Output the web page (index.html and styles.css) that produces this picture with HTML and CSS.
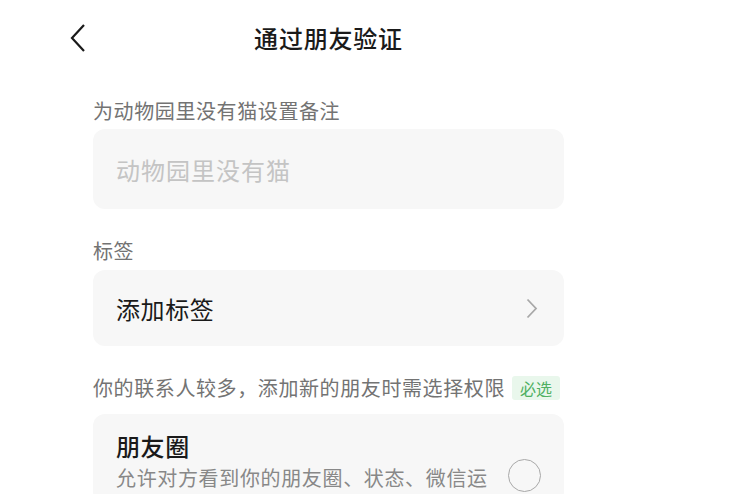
FILE: index.html
```html
<!DOCTYPE html>
<html>
<head lang="zh">
    <meta charset="UTF-8">
    <title>通过朋友验证</title>
    <link rel="stylesheet" href="styles.css">
</head>
<body>
<div class="page">
    <div class="header">
        <a href="#" class="back">
            <svg width="16" height="28" viewBox="0 0 16 28"><path d="M14 1 L2 14 L14 27" fill="none" stroke="#1a1a1a" stroke-width="2.2"/></svg>
        </a>
        <span class="title">通过朋友验证</span>
        <span></span>
    </div>

    <p class="label first">为动物园里没有猫设置备注</p>
    <div class="box input">
        <span class="placeholder">动物园里没有猫</span>
    </div>

    <p class="label">标签</p>
    <div class="box row">
        <span class="text">添加标签</span>
        <svg class="chevron" width="12" height="21" viewBox="0 0 12 21"><path d="M1.5 1.5 L10 10.5 L1.5 19.5" fill="none" stroke="#a8a8a8" stroke-width="1.8"/></svg>
    </div>

    <p class="label">你的联系人较多，添加新的朋友时需选择权限<span class="badge">必选</span></p>
    <div class="box card">
        <div class="card-text">
            <div class="card-title">朋友圈</div>
            <div class="card-sub">允许对方看到你的朋友圈、状态、微信运</div>
        </div>
        <span class="radio"></span>
    </div>
</div>
</body>
</html>
```

FILE: styles.css
```css
body {
    margin: 0px;
    background: #ffffff;
    font-family: "Noto Sans CJK SC", "Noto Sans", sans-serif;
    overflow: hidden;
}
.page {
    width: 471px;
    padding-left: 93px;
}
.header {
    display: grid;
    grid-template-columns: 1fr auto 1fr;
    align-items: center;
    height: 75px;
    width: 517px;
    margin-left: -23px;
}
.back {
    display: flex;
    align-items: center;
    height: 28px;
}
.title {
    font-size: 24px;
    font-weight: 500;
    color: #1a1a1a;
    letter-spacing: 0.8px;
}
.label {
    margin: 28px 0px 5px 0px;
    font-size: 20px;
    line-height: 28px;
    color: #737373;
    letter-spacing: 0.6px;
    display: flex;
    align-items: center;
}
.label.first {
    margin-top: 22px;
    margin-bottom: 4px;
}
.box {
    background: #f7f7f7;
    border-radius: 12px;
    box-sizing: border-box;
}
.input {
    height: 80px;
    padding-left: 23px;
    display: flex;
    align-items: center;
}
.placeholder {
    font-size: 24px;
    color: #c4c4c4;
    letter-spacing: 1px;
}
.row {
    height: 76px;
    padding: 0px 26px 0px 23px;
    display: flex;
    align-items: center;
    justify-content: space-between;
}
.row .text {
    font-size: 24px;
    color: #1a1a1a;
    letter-spacing: 0.6px;
}
.badge {
    margin-left: 7px;
    width: 48px;
    height: 24px;
    line-height: 24px;
    text-align: center;
    font-size: 16px;
    letter-spacing: 0px;
    color: #4fb062;
    background: #e9f7ec;
    border-radius: 3px;
}
.label + .card {
    margin-top: 12px;
}
.card {
    padding: 16px 23px 0px 23px;
    height: 90px;
    display: flex;
    justify-content: space-between;
    align-items: flex-start;
}
.card-title {
    font-size: 24px;
    line-height: 32px;
    font-weight: 500;
    color: #1a1a1a;
    letter-spacing: 0.6px;
}
.card-sub {
    margin-top: 2px;
    font-size: 20px;
    line-height: 28px;
    color: #888888;
    letter-spacing: 0.65px;
}
.radio {
    width: 31px;
    height: 31px;
    border: 1.6px solid #a8a8a8;
    border-radius: 50%;
    margin-top: 29px;
}
```
